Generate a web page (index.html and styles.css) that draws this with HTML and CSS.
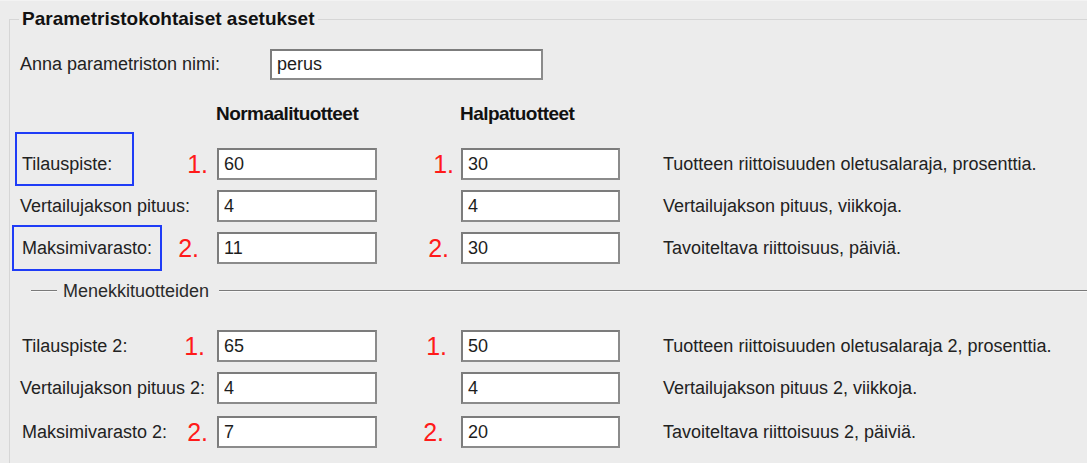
FILE: index.html
```html
<!DOCTYPE html>
<html lang="fi">
<head>
<meta charset="utf-8">
<title>Parametristokohtaiset asetukset</title>
<link rel="stylesheet" href="styles.css">
</head>
<body>
<fieldset class="group">
  <legend class="group-title">Parametristokohtaiset asetukset</legend>
  <div class="content">
    <div class="name-row">
      <label class="name-label">Anna parametriston nimi:</label>
      <input class="field name-field" type="text" value="perus" readonly>
    </div>

    <div class="grid-row head-row">
      <div class="head col-normal">Normaalituotteet</div>
      <div class="head col-halpa">Halpatuotteet</div>
    </div>

    <div class="rows">
      <div class="grid-row">
        <div class="label"><span class="mark mark-1"></span>Tilauspiste:</div>
        <div class="num col-n1 off-10">1.</div>
        <input class="field col-normal" type="text" value="60" readonly>
        <div class="num col-n2 off-8">1.</div>
        <input class="field col-halpa" type="text" value="30" readonly>
        <div class="desc">Tuotteen riittoisuuden oletusalaraja, prosenttia.</div>
      </div>
      <div class="grid-row">
        <div class="label label-wide">Vertailujakson pituus:</div>
        <input class="field col-normal" type="text" value="4" readonly>
        <input class="field col-halpa" type="text" value="4" readonly>
        <div class="desc">Vertailujakson pituus, viikkoja.</div>
      </div>
      <div class="grid-row">
        <div class="label"><span class="mark mark-2"></span>Maksimivarasto:</div>
        <div class="num col-n1 off-19">2.</div>
        <input class="field col-normal" type="text" value="11" readonly>
        <div class="num col-n2 off-13">2.</div>
        <input class="field col-halpa" type="text" value="30" readonly>
        <div class="desc">Tavoiteltava riittoisuus, päiviä.</div>
      </div>
    </div>

    <div class="separator">
      <span class="sep-line sep-short"></span>
      <span class="sep-text">Menekkituotteiden</span>
      <span class="sep-line sep-long"></span>
    </div>

    <div class="rows rows-bottom">
      <div class="grid-row">
        <div class="label">Tilauspiste 2:</div>
        <div class="num col-n1 off-13">1.</div>
        <input class="field col-normal" type="text" value="65" readonly>
        <div class="num col-n2 off-15">1.</div>
        <input class="field col-halpa" type="text" value="50" readonly>
        <div class="desc">Tuotteen riittoisuuden oletusalaraja 2, prosenttia.</div>
      </div>
      <div class="grid-row">
        <div class="label label-wide">Vertailujakson pituus 2:</div>
        <input class="field col-normal" type="text" value="4" readonly>
        <input class="field col-halpa" type="text" value="4" readonly>
        <div class="desc">Vertailujakson pituus 2, viikkoja.</div>
      </div>
      <div class="grid-row last-row">
        <div class="label">Maksimivarasto 2:</div>
        <div class="num col-n1 off-10">2.</div>
        <input class="field col-normal" type="text" value="7" readonly>
        <div class="num col-n2 off-18">2.</div>
        <input class="field col-halpa" type="text" value="20" readonly>
        <div class="desc">Tavoiteltava riittoisuus 2, päiviä.</div>
      </div>
    </div>
  </div>
</fieldset>
</body>
</html>
```

FILE: styles.css
```css
html, body {
  margin: 0;
  padding: 0;
  background: #ececec;
  overflow: hidden;
}

body {
  width: 1087px;
  height: 463px;
  font-family: "Liberation Sans", Arial, sans-serif;
  font-size: 18px;
  color: #222222;
  border-top: 1px solid #f3f3f3;
  box-sizing: border-box;
}

.group {
  box-sizing: border-box;
  margin: 7px 0 0 9px;
  padding: 0;
  border: 1px solid #d6d6d6;
  border-right: none;
  border-bottom: none;
  height: 455px;
  min-width: 0;
}

.group-title {
  margin-left: 9px;
  padding: 0 3px;
  font-size: 19px;
  line-height: 22px;
  font-weight: bold;
  color: #111111;
}

.content {
  padding-left: 10px;
  padding-top: 19px;
}

.name-row {
  display: flex;
  align-items: center;
  height: 31px;
}

.name-label {
  width: 250px;
}

.field {
  box-sizing: border-box;
  height: 32px;
  margin: 0;
  padding: 0 0 0 5px;
  border: 2px solid #8b8b8b;
  border-top-color: #7c7c7c;
  border-left-color: #7c7c7c;
  background: #ffffff;
  font-family: "Liberation Sans", Arial, sans-serif;
  font-size: 18px;
  color: #1d1d1d;
  outline: none;
}

.name-field {
  width: 273px;
  height: 31px;
}

.grid-row {
  display: grid;
  grid-template-columns: 160px 37px 160px 84px 159px 43px 1fr;
  align-items: center;
  height: 32px;
}

.head-row {
  margin-top: 23px;
  height: 22px;
}

.head {
  font-size: 19px;
  line-height: 22px;
  font-weight: bold;
  letter-spacing: -0.55px;
  color: #111111;
  margin-left: -1px;
}

.rows {
  display: flex;
  flex-direction: column;
  gap: 10px;
  margin-top: 23px;
}

.rows-bottom {
  margin-top: 29px;
}

.last-row {
  margin-top: 2px;
}

.label {
  grid-column: 1;
  grid-row: 1;
  position: relative;
  white-space: nowrap;
  margin-left: 2px;
}

.label-wide {
  margin-left: 0;
}

.col-n1 { grid-column: 2; grid-row: 1; }
.col-normal { grid-column: 3; grid-row: 1; width: 160px; }
.col-n2 { grid-column: 4; grid-row: 1; }
.col-halpa { grid-column: 5; grid-row: 1; width: 159px; }

.head.col-normal,
.head.col-halpa {
  width: auto;
}

.desc {
  grid-column: 7;
  grid-row: 1;
  white-space: nowrap;
}

.num {
  justify-self: end;
  color: #ff1a1a;
  font-size: 25px;
  line-height: 32px;
  white-space: nowrap;
}

.off-8 { margin-right: 7px; }
.off-10 { margin-right: 9px; }
.off-13 { margin-right: 12px; }
.off-15 { margin-right: 14px; }
.off-18 { margin-right: 17px; }
.off-19 { margin-right: 18px; }

.mark {
  position: absolute;
  box-sizing: border-box;
  border: 2px solid #1f3cf7;
}

.mark-1 {
  left: -7px;
  top: -22px;
  width: 119px;
  height: 54px;
}

.mark-2 {
  left: -10px;
  top: -13px;
  width: 150px;
  height: 46px;
}

.separator {
  display: flex;
  align-items: center;
  height: 20px;
  margin-top: 17px;
}

.sep-line {
  height: 0;
  border-top: 1px solid #7a7a7a;
  border-bottom: 1px solid #f8f8f8;
}

.sep-short {
  width: 26px;
  margin-left: 11px;
}

.sep-text {
  margin: 0 10px 0 6px;
  color: #2a2a2a;
}

.sep-long {
  flex: 1;
}
```
